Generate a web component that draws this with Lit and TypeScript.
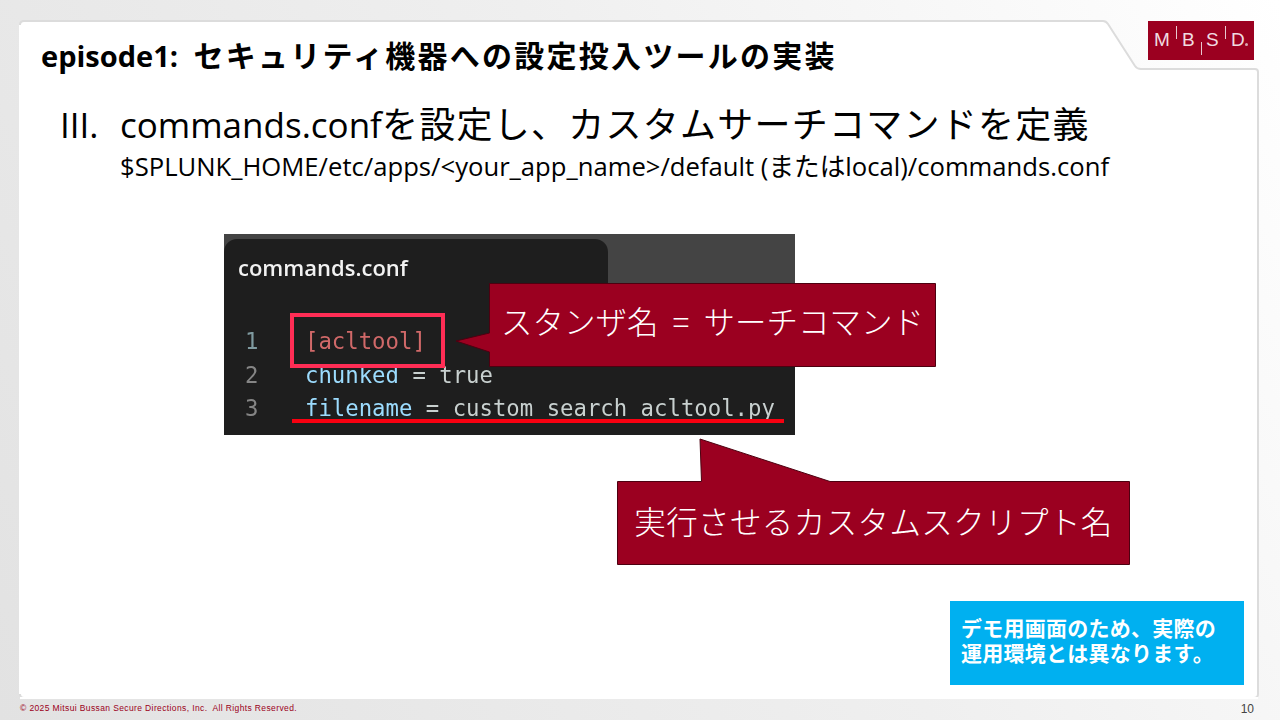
import { LitElement, html, css } from "lit";
import { customElement } from "lit/decorators.js";

const SANS = css`"Open Sans", "Noto Sans CJK JP", sans-serif`;

@customElement("app-root")
export class AppRoot extends LitElement {
  static styles = css`
    :host { display: block; width: 1280px; height: 720px; overflow: hidden; }
    .slide {
      position: relative; width: 1280px; height: 720px; box-sizing: border-box;
      display: flex; flex-direction: column;
      background: linear-gradient(60deg, #e2e2e2 0%, #efefef 55%, #ffffff 100%);
      font-family: ${SANS}; color: #000;
    }
    .frame { position: absolute; left: 0; top: 0; }
    .top {
      position: relative; display: flex; justify-content: space-between; align-items: flex-start;
      padding: 21px 26px 0 41px; height: 39px;
    }
    .title {
      margin: 0; font-size: 29px; font-weight: 700; line-height: 36px; padding-top: 17px;
      white-space: nowrap;
    }
    .title .ja { font-size: 30px; letter-spacing: 2.25px; margin-left: 5.5px; }
    .logo {
      position: relative; width: 106px; height: 39px; background: #9b0020; color: #f0dce0;
      font-family: "Liberation Sans", sans-serif; font-size: 19px; font-weight: 400;
    }
    .logo span { position: absolute; top: 9px; line-height: 20px; }
    .logo i { position: absolute; width: 1px; background: #e8c8cf; }
    .logo small { position: absolute; left: 97px; top: 22px; width: 3px; height: 3px; border-radius: 50%; background: #d9a9b2; }
    .heading {
      position: relative; display: flex; margin: 43px 0 0 60px; font-size: 35px; line-height: 44px; white-space: nowrap;
    }
    .heading .num { width: 60px; }
    .heading .ja { font-size: 36px; letter-spacing: 1.25px; }
    .sub {
      position: relative; margin: 1px 0 0 120px; font-size: 25.65px; line-height: 38px; white-space: nowrap;
    }
    .code {
      position: relative; margin: 48px 0 0 224px; width: 571px; height: 201px; background: #444;
    }
    .tab {
      width: 384px; height: 44px; margin-top: 5px; box-sizing: border-box; background: #1e1e1e;
      border-radius: 13px 13px 0 0; padding: 13px 0 0 14px; position: absolute; top: 0; left: 0;
      color: #f2f2f2; font-size: 22px; font-weight: 600; line-height: 30px;
    }
    .tab span { filter: blur(0.35px); display: inline-block; }
    .editor {
      position: absolute; left: 0; right: 0; top: 49px; bottom: 0; background: #1e1e1e; overflow: hidden;
      font-family: "DejaVu Sans Mono", monospace; font-size: 22.3px; line-height: 33.5px;
      padding-top: 42px; box-sizing: border-box;
    }
    .row { display: flex; height: 33.5px; white-space: pre; filter: blur(0.35px); }
    .row.first { margin-bottom: 1px; margin-top: -0.5px; }
    .row.last { margin-top: -0.5px; }
    .ln { width: 81px; padding-left: 21px; box-sizing: border-box; color: #858585; }
    .row.first .ln { color: #7f9aa0; }
    .tag { color: #d16969; }
    .kw { color: #9cdcfe; }
    .val { color: #c8d0cf; }
    .box {
      position: absolute; left: 66px; top: 79px; width: 155px; height: 55px; box-sizing: border-box;
      border: 4px solid #ff2d55;
    }
    .under { position: absolute; left: 68px; top: 185px; width: 492px; height: 3.5px; background: #f80010; }
    .callout {
      position: absolute; display: flex; align-items: center; justify-content: center;
      color: #fff; white-space: nowrap; box-sizing: border-box;
    }
    .callout svg { position: absolute; left: 0; top: 0; overflow: visible; }
    .callout span { position: relative; font-family: "Noto Sans CJK JP", sans-serif; font-weight: 300; font-size: 31.5px; line-height: 40px; }
    .c1 { left: 265px; top: 49px; width: 447px; height: 84px; padding-bottom: 10px; }
    .c1 span { word-spacing: 7px; }
    .c2 { left: 393px; top: 247px; width: 513px; height: 84px; padding-bottom: 6px; }
    .c2 span { letter-spacing: 0.4px; }
    .note {
      position: relative; margin: 166px 0 0 950px; width: 294px; height: 84px; box-sizing: border-box;
      background: #00b0f0; color: #fff; padding: 14px 0 0 11px;
      font-family: "Noto Sans CJK JP", sans-serif; font-weight: 700; font-size: 21px; letter-spacing: 0.25px; line-height: 25px; white-space: nowrap;
    }
    .foot {
      position: absolute; left: 20px; right: 26px; top: 700px; display: flex; justify-content: space-between;
    }
    .copy {
      font-family: "Liberation Sans", sans-serif; font-size: 8.5px; line-height: 16px; color: #9b0020; letter-spacing: 0.38px;
    }
    .page { font-family: "Liberation Sans", sans-serif; font-size: 12px; line-height: 18px; color: #444; }
  `;

  render() {
    return html`
      <div class="slide">
        <svg class="frame" width="1280" height="720" viewBox="0 0 1280 720">
          <path d="M20 25 Q20 21 24 21 H1103 Q1106 21 1108 24 L1135 66 Q1137 69 1141 69 H1255 Q1258 69 1258 72 V694 Q1258 698 1254 698 H24 Q20 698 20 694 Z"
            fill="#ffffff" stroke="#dcdcdc" stroke-width="2"></path>
          <path d="M20 698 H1258 M20 25 V694" fill="none" stroke="#ffffff" stroke-width="2"></path>
        </svg>
        <div class="top">
          <h1 class="title">episode1:<span class="ja"> セキュリティ機器への設定投入ツールの実装</span></h1>
          <div class="logo">
            <span style="left:6px">M</span><i style="left:28px;top:5px;height:13px"></i>
            <span style="left:34px">B</span><i style="left:53px;top:21px;height:13px"></i>
            <span style="left:58px">S</span><i style="left:77px;top:5px;height:13px"></i>
            <span style="left:83px">D</span><small></small>
          </div>
        </div>
        <div class="heading">
          <span class="num">III.</span>
          <span>commands.conf<span class="ja">を設定し、カスタムサーチコマンドを定義</span></span>
        </div>
        <div class="sub">$SPLUNK_HOME/etc/apps/&lt;your_app_name&gt;/default (またはlocal)/commands.conf</div>
        <div class="code">
          <div class="tab"><span>commands.conf</span></div>
          <div class="editor">
            <div class="row first"><span class="ln">1</span><span class="tag">[acltool]</span></div>
            <div class="row"><span class="ln">2</span><span class="kw">chunked</span><span class="val"> = true</span></div>
            <div class="row last"><span class="ln">3</span><span class="kw">filename</span><span class="val"> = custom_search_acltool.py</span></div>
          </div>
          <div class="box"></div>
          <div class="under"></div>
          <div class="callout c1">
            <svg width="447" height="84"><path d="M0.5 0.5 H446.5 V83.5 H0.5 V69 L-33 58 L0.5 50 Z" fill="#9b0020" stroke="#4d0010"></path></svg>
            <span>スタンザ名 = サーチコマンド</span>
          </div>
          <div class="callout c2">
            <svg width="513" height="84"><path d="M0.5 0.5 H84.5 L83 -42 L213 0.5 H512.5 V83.5 H0.5 Z" fill="#9b0020" stroke="#4d0010"></path></svg>
            <span>実行させるカスタムスクリプト名</span>
          </div>
        </div>
        <div class="note">デモ用画面のため、実際の<br />運用環境とは異なります。</div>
        <div class="foot">
          <span class="copy">© 2025 Mitsui Bussan Secure Directions, Inc.&nbsp; All Rights Reserved.</span>
          <span class="page">10</span>
        </div>
      </div>
    `;
  }
}
